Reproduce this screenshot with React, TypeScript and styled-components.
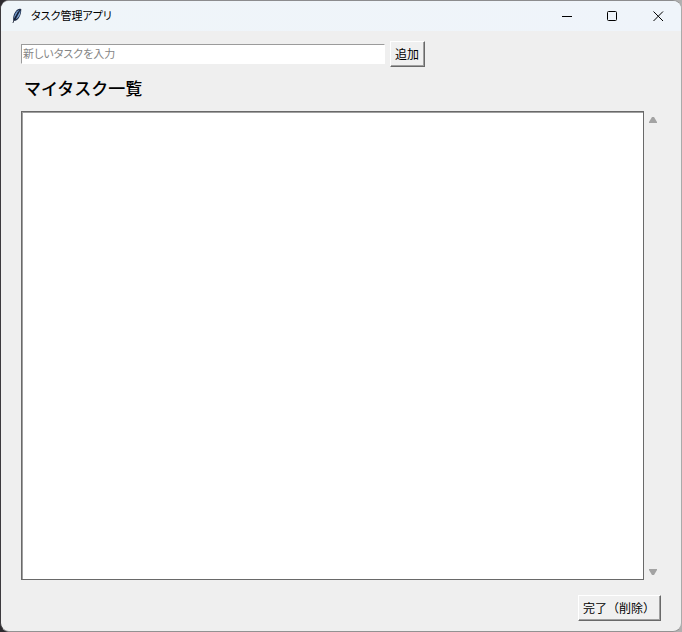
import React, { useState } from "react";
import styled, { createGlobalStyle } from "styled-components";

const GlobalStyle = createGlobalStyle`
  *, *::before, *::after { box-sizing: border-box; }
  body {
    margin: 0;
    background: linear-gradient(90deg, #2c2a2e 0%, #35343a 67%, #a4a4a8 68%, #b0b0b0 100%);
    font-family: "Noto Sans CJK JP", sans-serif;
    color: #000;
  }
  button, input, select { font-family: inherit; color: inherit; }
`;

const Frame = styled.div`
  display: flex;
  flex-direction: column;
  min-height: 100vh;
  border: 1px solid;
  border-color: #8c8c8e #aaaaaa #929292 #3c3a3e;
  border-radius: 9px;
  overflow: hidden;
  background: #efefef;
`;

const TitleBar = styled.header`
  display: flex;
  align-items: center;
  height: 30px;
  padding-left: 8px;
  background: linear-gradient(90deg, #eff5f9, #eff4fa);
`;

const Title = styled.h1`
  flex: 1;
  margin: 0 0 0 6px;
  padding-bottom: 2px;
  font-size: 11px;
  line-height: 16px;
  font-weight: 400;
  font-feature-settings: "palt";
`;

const CaptionButton = styled.button`
  display: flex;
  align-items: center;
  justify-content: center;
  width: 46px;
  height: 30px;
  padding: 0;
  border: 0;
  background: transparent;
`;

const Content = styled.main`
  flex: 1;
  display: flex;
  flex-direction: column;
  padding: 10px 20px;
`;

const EntryRow = styled.form`
  display: flex;
  align-items: center;
  gap: 5px;
`;

const TaskInput = styled.input`
  width: 364px;
  height: 20px;
  padding: 0 1px 2px;
  border: 1px solid;
  border-color: #9b9b9b #fff #fff #9b9b9b;
  border-radius: 0;
  outline: 0;
  background: #fff;
  font-size: 11px;
  font-feature-settings: "palt";
  &::placeholder { color: #858585; opacity: 1; }
`;

const PushButton = styled.button`
  height: 26px;
  padding: 0 5px 0 4px;
  border: 1px solid;
  border-color: #fff #696969 #696969 #fff;
  border-radius: 0;
  box-shadow: inset -1px -1px #a0a0a0;
  background: #f0f0f0;
  font-size: 12px;
  line-height: 16px;
`;

const Heading = styled.h2`
  margin: 9px 0 11px 3px;
  font-size: 17px;
  line-height: 24px;
  font-weight: 500;
`;

const ListRow = styled.div`
  flex: 1;
  display: flex;
  min-height: 120px;
`;

const TaskList = styled.select`
  flex: 1;
  min-width: 0;
  height: auto;
  padding: 0;
  border: 1px solid #696969;
  border-radius: 0;
  outline: 0;
  box-shadow: inset 1px 1px #a0a0a0;
  background: #fff;
  font-size: 12px;
`;

const ScrollTrack = styled.div`
  display: flex;
  flex-direction: column;
  justify-content: space-between;
  width: 17px;
`;

const ArrowButton = styled.button`
  display: flex;
  align-items: center;
  justify-content: center;
  width: 17px;
  height: 17px;
  padding: 0 0 0 1px;
  border: 0;
  background: transparent;
`;

const Footer = styled.footer`
  display: flex;
  justify-content: flex-end;
  margin-top: 15px;
`;

const Feather = () => (
  <svg width="16" height="16" viewBox="0 0 16 16" aria-hidden="true">
    <path d="M4.4 12.8C3.5 9.5 5 4.5 8.2 1.8C9.6.7 11.4.4 12 1.2C12.7 2.8 11.8 6.8 10 9.7C8.8 11.5 6.8 13.2 4.4 12.8Z" fill="#1c2a45" />
    <path d="M5 10.7C5 7 6.6 3.6 10.3 1.6L7.6 6.6Z" fill="#6f95c6" />
    <path d="M6.8 11.2L11.4 2.6C11.6 6.2 10 9.8 6.8 11.2Z" fill="#80a7d5" />
    <path d="M3.9 15L5.5 11L9.4 4" fill="none" stroke="#10182b" strokeWidth=".8" />
  </svg>
);

const Triangle = ({ down = false }: { down?: boolean }) => (
  <svg width="8" height="6" viewBox="0 0 8 6" aria-hidden="true">
    <path d={down ? "M0 0H8V1L5 6H3L0 1Z" : "M3 0H5L8 5V6H0V5Z"} fill="#a3a3a3" />
  </svg>
);

const captions = [
  { label: "最小化", shape: <path d="M1 5.5H11" /> },
  { label: "最大化", shape: <rect x=".5" y=".5" width="9" height="9" rx="1" /> },
  { label: "閉じる", shape: <path d="M.5 .5L10 10M10 .5L.5 10" /> },
];

export default function App() {
  const [draft, setDraft] = useState("");
  const [tasks, setTasks] = useState<string[]>([]);
  const [selected, setSelected] = useState(-1);

  const addTask = (event: React.FormEvent) => {
    event.preventDefault();
    if (!draft.trim()) return;
    setTasks([...tasks, draft.trim()]);
    setDraft("");
  };

  const completeTask = () => {
    setTasks(tasks.filter((_, index) => index !== selected));
    setSelected(-1);
  };

  return (
    <>
      <GlobalStyle />
      <Frame>
        <TitleBar>
          <Feather />
          <Title>タスク管理アプリ</Title>
          {captions.map(({ label, shape }) => (
            <CaptionButton key={label} type="button" aria-label={label}>
              <svg width="11" height="11" viewBox="0 0 11 11" fill="none" stroke="#000" strokeWidth="1" aria-hidden="true">
                {shape}
              </svg>
            </CaptionButton>
          ))}
        </TitleBar>
        <Content>
          <EntryRow onSubmit={addTask}>
            <TaskInput
              aria-label="新しいタスク"
              placeholder="新しいタスクを入力"
              value={draft}
              onChange={(event) => setDraft(event.target.value)}
            />
            <PushButton type="submit">追加</PushButton>
          </EntryRow>
          <Heading id="list-heading">マイタスク一覧</Heading>
          <ListRow>
            <TaskList
              size={2}
              aria-labelledby="list-heading"
              value={selected}
              onChange={(event) => setSelected(Number(event.target.value))}
            >
              {tasks.map((task, index) => (
                <option key={index} value={index}>{task}</option>
              ))}
            </TaskList>
            <ScrollTrack>
              <ArrowButton type="button" aria-label="上へ"><Triangle /></ArrowButton>
              <ArrowButton type="button" aria-label="下へ"><Triangle down /></ArrowButton>
            </ScrollTrack>
          </ListRow>
          <Footer>
            <PushButton type="button" onClick={completeTask}>完了（削除）</PushButton>
          </Footer>
        </Content>
      </Frame>
    </>
  );
}
